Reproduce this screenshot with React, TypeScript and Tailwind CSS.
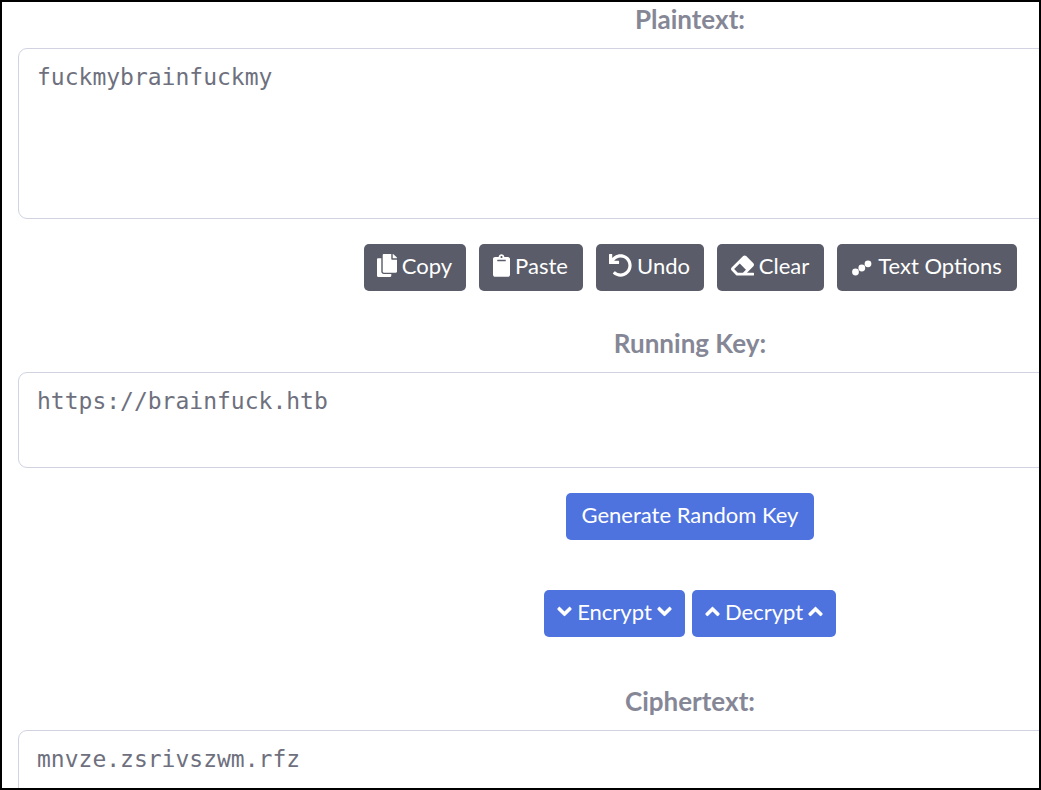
import type { ReactNode } from "react";
import { FaAngleDown, FaAngleUp, FaClipboard, FaCopy, FaEraser, FaUndo } from "react-icons/fa";

function DotsIcon() {
  return (
    <svg viewBox="0 0 22 23" className="h-[23px] w-[22px]" fill="currentColor" aria-hidden="true">
      <circle cx="4.5" cy="18" r="3.4" />
      <circle cx="10.8" cy="14" r="3.4" />
      <circle cx="17" cy="9.8" r="3.4" />
    </svg>
  );
}

type ButtonProps = { tone: "dark" | "blue"; width: string; children: ReactNode };

function Button({ tone, width, children }: ButtonProps) {
  const color = tone === "dark" ? "bg-[#5a5c69]" : "bg-[#4e73df]";
  return (
    <button
      type="button"
      className={`flex h-[47px] shrink-0 items-center justify-center gap-[5px] rounded-[5px] pb-1 text-[22px] leading-[34px] whitespace-nowrap text-white ${color} ${width}`}
    >
      {children}
    </button>
  );
}

type FieldProps = { id: string; label: string; value: string; height: string };

function Field({ id, label, value, height }: FieldProps) {
  return (
    <div className="flex flex-col gap-3">
      <label htmlFor={id} className="text-center text-[26px] leading-[34px] font-bold text-[#858796]">
        {label}
      </label>
      <textarea
        id={id}
        defaultValue={value}
        spellCheck={false}
        className={`block w-full resize-none rounded-[9px] border border-[#d1d3e2] bg-white px-[18px] py-[10px] font-['DejaVu_Sans_Mono',monospace] text-[23px] leading-9 text-[#6e707e] outline-none ${height}`}
      />
    </div>
  );
}

export default function App() {
  return (
    <div className="h-screen overflow-hidden border-2 border-black bg-white font-['Lato',sans-serif]">
      <main className="-mr-[323px] ml-4">
        <Field id="plaintext" label="Plaintext:" value="fuckmybrainfuckmy" height="h-[171px]" />
        <div className="mt-[25px] mb-[35px] flex justify-center gap-[13px]">
          <Button tone="dark" width="w-[102px]"><FaCopy className="h-[23px] w-5" />Copy</Button>
          <Button tone="dark" width="w-[104px]"><FaClipboard className="h-[23px] w-[17px]" />Paste</Button>
          <Button tone="dark" width="w-[108px]"><FaUndo className="h-[23px] w-[23px]" />Undo</Button>
          <Button tone="dark" width="w-[107px]"><FaEraser className="h-[23px] w-[23px]" />Clear</Button>
          <Button tone="dark" width="w-[180px]"><DotsIcon />Text Options</Button>
        </div>
        <Field id="key" label="Running Key:" value="https://brainfuck.htb" height="h-24" />
        <div className="mt-[25px] mb-[50px] flex justify-center">
          <Button tone="blue" width="w-[248px]">Generate Random Key</Button>
        </div>
        <div className="mb-[47px] flex justify-center gap-[7px]">
          <Button tone="blue" width="w-[141px]">
            <FaAngleDown className="h-[23px] w-[15px]" />Encrypt<FaAngleDown className="h-[23px] w-[15px]" />
          </Button>
          <Button tone="blue" width="w-[144px]">
            <FaAngleUp className="h-[23px] w-[15px]" />Decrypt<FaAngleUp className="h-[23px] w-[15px]" />
          </Button>
        </div>
        <Field id="ciphertext" label="Ciphertext:" value="mnvze.zsrivszwm.rfz" height="h-[171px]" />
      </main>
    </div>
  );
}
